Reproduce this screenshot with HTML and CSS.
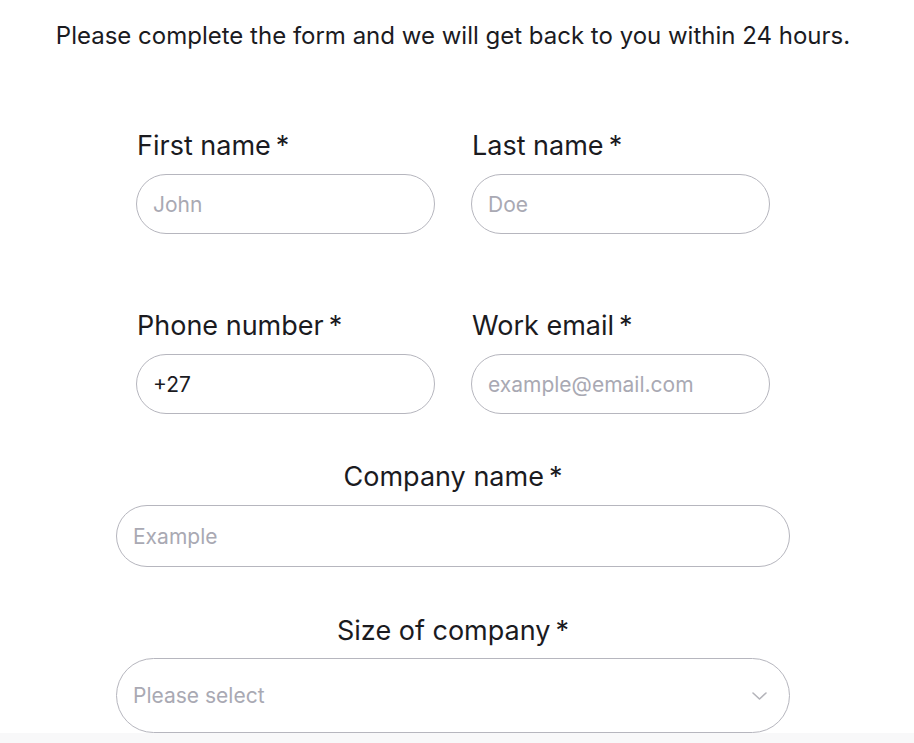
FILE: index.html
```html
<!DOCTYPE html>
<html lang="en">
<head>
<meta charset="utf-8">
<title>Contact form</title>
<link rel="stylesheet" href="styles.css">
</head>
<body>
<main class="page">
  <p class="intro">Please complete the form and we will get back to you within 24 hours.</p>
  <form class="form">
    <div class="row">
      <div class="field">
        <label class="label">First name<span class="req">*</span></label>
        <div class="input"><span class="ph">John</span></div>
      </div>
      <div class="field">
        <label class="label">Last name<span class="req">*</span></label>
        <div class="input"><span class="ph">Doe</span></div>
      </div>
    </div>
    <div class="row row2">
      <div class="field">
        <label class="label">Phone number<span class="req">*</span></label>
        <div class="input"><span class="val">+27</span></div>
      </div>
      <div class="field">
        <label class="label">Work email<span class="req">*</span></label>
        <div class="input"><span class="ph">example@email.com</span></div>
      </div>
    </div>
    <div class="wide company">
      <label class="label center">Company name<span class="req">*</span></label>
      <div class="input big"><span class="ph">Example</span></div>
    </div>
    <div class="wide size">
      <label class="label center">Size of company<span class="req">*</span></label>
      <div class="input select"><span class="ph">Please select</span>
        <svg class="chev" width="15" height="8" viewBox="0 0 15 8"><path d="M1 1l6.5 6 6.5-6" fill="none" stroke="#b4b4ba" stroke-width="1.6" stroke-linecap="round" stroke-linejoin="round"/></svg>
      </div>
    </div>
  </form>
</main>
<div class="band"></div>
</body>
</html>
```
FILE: styles.css
```css
* { box-sizing: border-box; }
html, body { margin: 0; padding: 0; background: #fff; }
body { font-family: Inter, "Noto Sans", sans-serif; color: #1b1b1f; overflow: hidden; }
.page { width: 906px; }
.intro { margin: 0; padding-top: 20px; text-align: center; font-size: 24px; line-height: 32px; color: #1b1b1f; }
.form { display: flex; flex-direction: column; align-items: center; margin-top: 78px; }
.row { display: grid; grid-template-columns: 299px 299px; column-gap: 36px; width: 634px; }
.row2 { margin-top: 76px; }
.field { display: flex; flex-direction: column; }
.label { font-size: 27px; line-height: 32px; font-weight: 400; color: #1b1b1f; padding-left: 1px; margin-bottom: 12px; }
.label.center { text-align: center; padding-left: 0; }
.req { margin-left: 5px; }
.input { height: 60px; border: 1px solid #b6b6be; border-radius: 30px; display: flex; align-items: center; padding-left: 16px; font-size: 21px; }
.ph { color: #a9a9b3; }
.val { color: #1b1b1f; }
.wide { width: 674px; display: flex; flex-direction: column; }
.company { margin-top: 47px; }
.big { height: 62px; border-radius: 31px; }
.size { margin-top: 48px; }
.size .label { margin-bottom: 11px; }
.select { height: 75px; border-radius: 38px; justify-content: space-between; padding-right: 22px; }
.chev { display: block; }
.band { height: 20px; background: #f8f8f9; }
```
